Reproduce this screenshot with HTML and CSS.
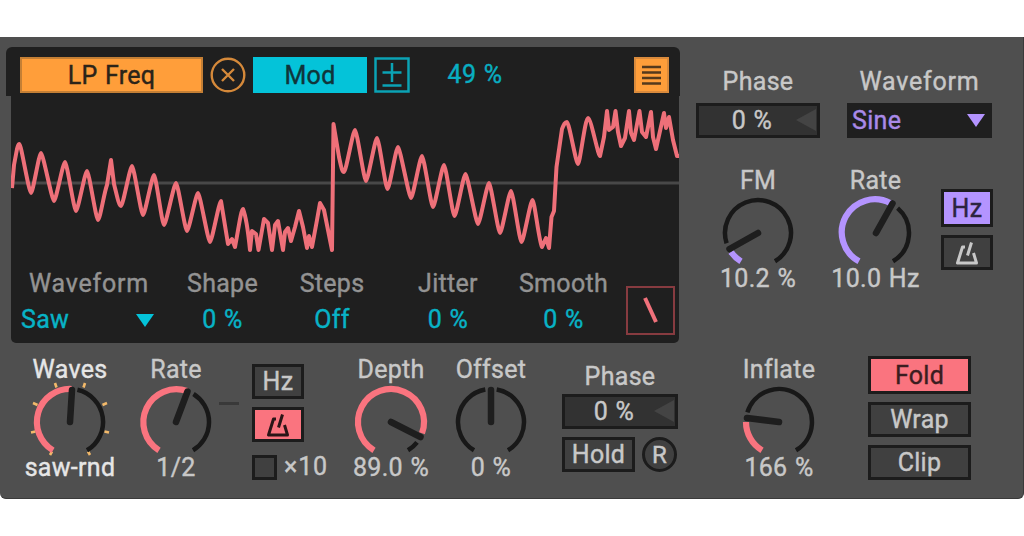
FILE: index.html
```html
<!DOCTYPE html>
<html lang="en">

<head>
  <meta charset="utf-8">
  <title>LFO Device</title>
  <link rel="stylesheet" href="styles.css">
</head>

<body>
  <div class="device">
    <div class="top">
      <!-- Display -->
      <div class="display">
        <div class="display-head">
          <div class="target">LP Freq</div>
          <svg class="unmap" width="36" height="36" viewBox="0 0 36 36">
            <circle cx="18" cy="18" r="16.300" />
            <path d="M12 12L24 24M24 12L12 24" />
          </svg>
          <div class="mod">Mod</div>
          <svg class="polarity" width="36" height="36" viewBox="0 0 36 36">
            <rect x="1.5" y="1.5" width="33" height="33" />
            <path d="M8.500 15.500H27.500M18 6V25M8.500 28.500H27.500" />
          </svg>
          <div class="amount">49 %</div>
          <svg class="list" width="35" height="36" viewBox="0 0 35 36">
            <rect x="1" y="1" width="33" height="34" />
            <path d="M8 10H27M8 15.500H27M8 21H27M8 26.500H27" />
          </svg>
        </div>
        <div class="display-body">
          <svg class="scope" width="668" height="173" viewBox="11 96 668 173">
            <path class="zero" d="M11 183H679" />
            <path class="wave" d="M12 188L14 165L17 149C18 146 18 144 19.500 144S29 193 31 193S39 153 41 153S52 201 54 201S63 162 65 162S74 211 76 211S85 171 87 171S96 220 98 220S104 193 107 185L111 160L114 184C117 196 119 206 121 206S130 166 132 166S141 215 143 215S152 175 154 175S162 225 164 225S174 183 176 183S185 231 187 231S196 193 198 193S208 242 210 242S219 201 221 201L228 244L232 239L235 247C238 232 241 209 243 209C245 214 248 230 250 250L252 231L256 234L258.500 250L264 219L268 223L272 250L275 225L278 221L283 250L285 232L288 228L291 241L295 227L299 211L303 227L307 248L309 236L312 247L317 220L320 203L324 210L328 230L332 250L333.500 124L339 157C341 166 342 172 344 172S353 130 355 130S364 181 366 181S375 138 377 138S385.500 189 387.500 189S396 147 398 147S409 198 411 198S420 156 422 156S431 207 433 207S442 165 444 165S452.500 216 454.500 216S463.500 174 465.500 174S476 224 478 224S487 183 489 183S498 233 500 233S509 191 511 191S519.500 242 521.500 242S530.500 200 532.500 200S539 242 542 247L546 238L549 248L551.500 217L554 211L556.500 167L562 129C564 124 565 122 567 122S576 164 578 164S585 118 588 118S598 156 600 156L604 137L607 111L609 130L613 127L615.500 111L618 132L621 146L625 138L629 111L631 133L634 140L639.500 111L642 132L646 137L651 112L653 137L656 149L664 113L666 128L669 117L673 140L677 156H680" />
          </svg>
          <div class="params">
            <div class="param">
              <div class="label wide">Waveform</div>
              <div class="select">Saw<svg width="18" height="13" viewBox="0 0 18 13">
                  <path d="M0 0H18L9 13Z" />
                </svg></div>
            </div>
            <div class="param">
              <div class="label">Shape</div>
              <div class="value">0 %</div>
            </div>
            <div class="param">
              <div class="label">Steps</div>
              <div class="value">Off</div>
            </div>
            <div class="param">
              <div class="label">Jitter</div>
              <div class="value">0 %</div>
            </div>
            <div class="param">
              <div class="label">Smooth</div>
              <div class="value">0 %</div>
            </div>
            <svg class="shape" width="49" height="49" viewBox="0 0 49 49">
              <rect x="1" y="1" width="47" height="47" />
              <path d="M19 12L30 36" />
            </svg>
          </div>
        </div>
      </div>

      <!-- Modulator -->
      <div class="modulator">
        <div class="row">
          <div class="field phase-wide">
            <div class="label">Phase</div>
            <div class="slider">0 %<svg width="20" height="22" viewBox="0 0 20 22">
                <path d="M20 0V22L0 11Z" />
              </svg></div>
          </div>
          <div class="field wave-select">
            <div class="label wide">Waveform</div>
            <div class="dropdown">Sine<svg width="18" height="13" viewBox="0 0 18 13">
                <path d="M0 0H18L9 13Z" />
              </svg></div>
          </div>
        </div>
        <div class="row knobs">
          <div class="knob fm">
            <div class="label">FM</div>
            <svg width="92" height="70" viewBox="-46 -38 92 70">
              <path class="track" d="M-31.400 10.200A33 33 0 1 1 17 28.300" />
              <path class="fill" d="M-17 28.300A33 33 0 0 1 -27 18.900" />
              <path class="pointer" d="M0 0L-28.500 16" />
            </svg>
            <div class="label">10.2 %</div>
          </div>
          <div class="knob fm-rate">
            <div class="label">Rate</div>
            <svg width="92" height="70" viewBox="-46 -38 92 70">
              <path class="track" d="M21.600 -24.900A33 33 0 0 1 17 28.300" />
              <path class="fill" d="M-17 28.300A33 33 0 0 1 14.500 -29.700" />
              <path class="pointer" d="M0 0L16.500 -29.500" />
            </svg>
            <div class="label">10.0 Hz</div>
          </div>
          <div class="units">
            <div class="button tall purple">Hz</div>
            <div class="button"><svg class="metronome" width="24" height="26" viewBox="0 0 24 26">
                <path d="M10 7H7.500L2.500 23H21.500L18.500 13M16.500 2.500L12.500 15.500" />
              </svg></div>
          </div>
        </div>
      </div>
    </div>

    <!-- Main controls -->
    <div class="bottom">
      <div class="knob bright">
        <div class="label">Waves</div>
        <svg width="92" height="70" viewBox="-46 -38 92 70">
          <path class="ticks" d="M-13.500 -34.500L-15 -39M13.500 -34.500L15 -39M-32.500 -17L-37 -19M32.500 -17L37 -19M-34.500 9.500L-39 10.500M34.500 9.500L39 10.500M-18 29.500L-20 33M18 29.500L20 33" />
          <path class="track" d="M7.400 -32.200A33 33 0 0 1 17 28.300" />
          <path class="fill" d="M-17 28.300A33 33 0 0 1 1.700 -33" />
          <path class="pointer" d="M0 0L2 -32" />
        </svg>
        <div class="label">saw-rnd</div>
      </div>
      <div class="knob">
        <div class="label">Rate</div>
        <svg width="92" height="70" viewBox="-46 -38 92 70">
          <path class="track" d="M17.500 -28A33 33 0 0 1 17 28.300" />
          <path class="fill" d="M-17 28.300A33 33 0 0 1 11 -31" />
          <path class="pointer" d="M0 0L11.500 -30.500" />
        </svg>
        <div class="label">1/2</div>
      </div>
      <div class="sync">
        <div class="dash"></div>
        <div class="units">
          <div class="button">Hz</div>
          <div class="button pink"><svg class="metronome" width="24" height="26" viewBox="0 0 24 26">
              <path d="M10 7H7.500L2.500 23H21.500L18.500 13M16.500 2.500L12.500 15.500" />
            </svg></div>
          <div class="times">
            <div class="checkbox"></div>
            <span>×10</span>
          </div>
        </div>
      </div>
      <div class="knob">
        <div class="label">Depth</div>
        <svg width="92" height="70" viewBox="-46 -38 92 70">
          <path class="track" d="M26 20.300A33 33 0 0 1 17 28.300" />
          <path class="fill" d="M-17 28.300A33 33 0 1 1 31 11.300" />
          <path class="pointer" d="M0 0L29.500 15" />
        </svg>
        <div class="label">89.0 %</div>
      </div>
      <div class="knob">
        <div class="label">Offset</div>
        <svg width="92" height="70" viewBox="-46 -38 92 70">
          <path class="track" d="M-17 28.300A33 33 0 0 1 -5.700 -32.500M5.700 -32.500A33 33 0 0 1 17 28.300" />
          <path class="pointer" d="M0 0V-32" />
        </svg>
        <div class="label">0 %</div>
      </div>
      <div class="field phase">
        <div class="label">Phase</div>
        <div class="slider">0 %<svg width="20" height="22" viewBox="0 0 20 22">
            <path d="M20 0V22L0 11Z" />
          </svg></div>
        <div class="retrig">
          <div class="button">Hold</div>
          <div class="round">R</div>
        </div>
      </div>
      <div class="knob">
        <div class="label">Inflate</div>
        <svg width="92" height="70" viewBox="-46 -38 92 70">
          <path class="track" d="M-31.600 -9.600A33 33 0 1 1 17 28.300" />
          <path class="fill" d="M-17 28.300A33 33 0 0 1 -33 0" />
          <path class="pointer" d="M0 0L-32 -4" />
        </svg>
        <div class="label">166 %</div>
      </div>
      <div class="modes">
        <div class="button tall pink">Fold</div>
        <div class="button">Wrap</div>
        <div class="button">Clip</div>
      </div>
    </div>
  </div>
</body>

</html>
```

FILE: styles.css
```css
* {
  box-sizing: border-box;
}

body {
  margin: 0;
  padding-top: 37px;
  background-color: #fff;
  font-family: Roboto, "Open Sans", sans-serif;
  font-size: 25px;
  line-height: 28px;
  letter-spacing: 0.3px;
  word-spacing: 1px;
  -webkit-text-stroke: 0.4px;
  color: #c8c8c8;
  white-space: nowrap;
}

svg {
  display: block;
  flex: none;
  overflow: visible;
  fill: none;
}

.device {
  height: 462px;
  background-color: #4f4f4f;
  border-bottom: 1px solid #3a3a3a;
  border-right: 1px solid #3a3a3a;
  border-radius: 0 0 6px 6px;
}

.top {
  display: flex;
  height: 306px;
}

.label {
  text-align: center;
}

.wide {
  letter-spacing: 0.8px;
}

/* Display */
.display {
  width: 680px;
  padding: 10px 0 0 6px;
}

.display-head {
  display: flex;
  align-items: center;
  height: 49px;
  padding: 7px 11px 0 14px;
  background-color: #1f1f1f;
  border-radius: 6px 6px 0 0;
}

.target {
  width: 183px;
  height: 36px;
  border: 2px solid #c47f35;
  background-color: #ff9e3a;
  color: #2b2419;
  text-align: center;
  line-height: 34px;
}

.unmap {
  margin: 0 7px;
  stroke: #d5893a;
  stroke-width: 2.4;
}

.mod {
  width: 114px;
  height: 36px;
  background-color: #04c3d9;
  color: #10343a;
  text-align: center;
  line-height: 37px;
}

.polarity {
  margin-left: 7px;
  stroke: #0ba3b5;
  stroke-width: 2.5;
}

.amount {
  width: 130px;
  text-align: center;
  color: #09aec1;
}

.list {
  margin-left: auto;
  fill: #ff9e3a;
  stroke: #d98a3c;
  stroke-width: 2;
}

.list path {
  stroke: #54391d;
  stroke-width: 2.6;
}

.display-body {
  width: 668px;
  height: 247px;
  margin-left: 5px;
  background-color: #1f1f1f;
  border-radius: 0 0 5px 5px;
}

.scope {
  overflow: hidden;
}

.zero {
  stroke: #484848;
  stroke-width: 3;
}

.wave {
  stroke: #ee7079;
  stroke-width: 4;
  stroke-linejoin: round;
}

.params {
  display: grid;
  grid-template-columns: 156px 111px 108px 124px 107px 62px;
}

.param {
  padding-top: 1px;
}

.param .label {
  color: #939393;
}

.value,
.select {
  margin-top: 8px;
  color: #08b3c6;
  text-align: center;
}

.select {
  display: flex;
  align-items: center;
  justify-content: space-between;
  padding: 0 13px 0 10px;
}

.select svg {
  fill: #04c3d9;
}

.shape {
  margin: 17px 0 0 9px;
  stroke: #873b40;
  stroke-width: 2;
}

.shape path {
  stroke: #f0717b;
  stroke-width: 4;
}

/* Modulator */
.modulator {
  padding: 31px 0 0 16px;
}

.row {
  display: flex;
}

.phase-wide {
  width: 124px;
}

.wave-select {
  width: 145px;
  margin-left: 27px;
}

.slider {
  position: relative;
  height: 35px;
  margin-top: 7px;
  padding-right: 12px;
  border: 3px solid #1c1c1c;
  background-color: #323232;
  text-align: center;
  line-height: 30px;
}

.slider svg {
  position: absolute;
  right: 1px;
  top: 3px;
  fill: #444;
}

.dropdown {
  display: flex;
  align-items: center;
  justify-content: space-between;
  height: 35px;
  margin-top: 7px;
  padding: 0 7px 0 5px;
  background-color: #1f1f1f;
  color: #a98ae8;
}

.dropdown svg {
  fill: #b494ff;
}

.knobs {
  margin-top: 29px;
}

.knob {
  display: flex;
  flex-direction: column;
  align-items: center;
}

.track {
  stroke: #181818;
  stroke-width: 4.5;
}

.fill {
  stroke: #fa747f;
  stroke-width: 6.2;
}

.modulator .fill {
  stroke: #b494ff;
}

.pointer {
  stroke: #1e1e1e;
  stroke-width: 6.5;
  stroke-linecap: round;
}

.ticks {
  stroke: #f2b96a;
  stroke-width: 2.6;
}

.fm {
  width: 124px;
}

.fm-rate {
  width: 111px;
}

.bright {
  color: #e6e6e6;
}

.units {
  display: flex;
  flex-direction: column;
  gap: 8px;
  width: 52px;
}

.knobs .units {
  margin: 22px 0 0 10px;
}

.button {
  display: flex;
  align-items: center;
  justify-content: center;
  height: 35px;
  border: 3px solid #1c1c1c;
  background-color: #404040;
}

.tall {
  height: 38px;
  padding-top: 2px;
}

.pink {
  background-color: #fa747f;
  color: #3a1d20;
}

.purple {
  background-color: #b494ff;
  color: #2c2440;
}

.metronome {
  stroke: #c8c8c8;
  stroke-width: 3;
  stroke-linejoin: round;
}

.pink .metronome {
  stroke: #2a1517;
}

/* Main controls */
.bottom {
  display: grid;
  grid-template-columns: 140px 72px 133px 92px 108px 154px 160px 164px;
  padding-top: 13px;
}

.sync {
  display: flex;
  padding: 8px 0 0 7px;
}

.dash {
  width: 20px;
  height: 3px;
  margin: 38px 13px 0 0;
  background-color: #393939;
}

.times {
  display: flex;
  align-items: center;
  gap: 7px;
  margin-top: 3px;
}

.times span {
  letter-spacing: 0.8px;
}

.checkbox {
  flex: none;
  width: 25px;
  height: 25px;
  border: 3px solid #1c1c1c;
  background-color: #404040;
}

.phase {
  width: 116px;
  margin: 7px 0 0 17px;
}

.phase .slider {
  margin-top: 3px;
}

.retrig {
  display: flex;
  gap: 7px;
  margin-top: 8px;
}

.retrig .button {
  width: 73px;
}

.round {
  width: 35px;
  height: 35px;
  border: 3px solid #1c1c1c;
  border-radius: 50%;
  background-color: #404040;
  text-align: center;
  line-height: 30px;
  font-size: 24px;
}

.modes {
  display: flex;
  flex-direction: column;
  gap: 8px;
  width: 103px;
  margin-left: 9px;
}
```
